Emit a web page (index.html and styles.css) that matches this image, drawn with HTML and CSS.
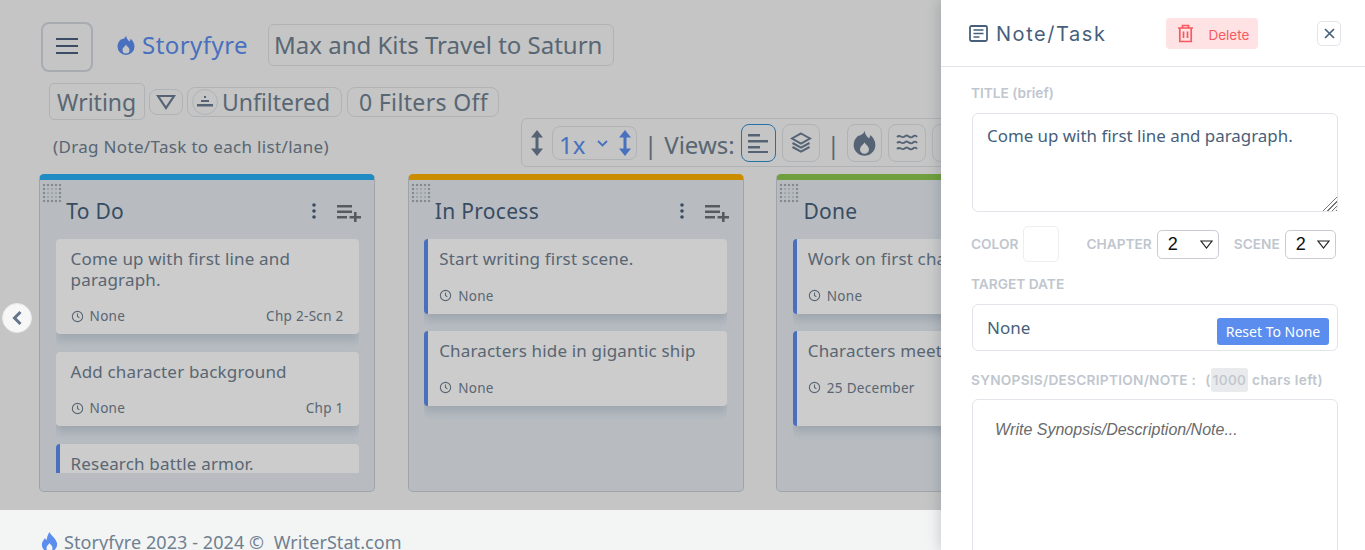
FILE: index.html
```html
<!DOCTYPE html>
<html lang="en">
<head>
  <meta charset="UTF-8" />
  <title>Storyfyre</title>
  <link rel="stylesheet" href="styles.css">
</head>
<body>
  <svg class="defs" width="0" height="0">
    <symbol id="flame" viewBox="3 1 18 20"><path d="M12 1.500c.6 3.400 2 4.600 3.600 6 .5-.8.8-1.700.9-2.700 2.500 1.900 4 4.700 4 7.700a8.500 8.500 0 0 1-17 0c0-3.100 1.500-5.300 3.300-7C9.800 5 11.700 3.700 12 1.500zM12 10.500c-.4 1.500-3.500 3-3.500 5.500a3.500 3.500 0 0 0 7 0c0-2.500-3.100-4-3.500-5.500z" fill-rule="evenodd"/></symbol>
    <symbol id="clock" viewBox="0 0 24 24"><circle cx="12" cy="12" r="9.500" fill="none" stroke="currentColor" stroke-width="2"/><path d="M12 6.500V12l3.500 2.500" fill="none" stroke="currentColor" stroke-width="2"/></symbol>
    <symbol id="kebab" viewBox="0 0 6 18"><circle cx="3" cy="3" r="1.800"/><circle cx="3" cy="9" r="1.800"/><circle cx="3" cy="15" r="1.800"/></symbol>
    <symbol id="addlist" viewBox="0 0 24 18"><path d="M0 1h15v2.400H0zM0 6.500h15v2.400H0zM0 12h10v2.400H0zM17 8h2.600v4H24v2.500h-4.400V18H17v-3.500h-4.500V12H17z"/></symbol>
    <symbol id="updown" viewBox="0 0 14 26"><path d="M7 0l6 7.500H8.500v11H13L7 26l-6-7.500h4.500v-11H1z"/></symbol>
  </svg>

  <main class="app">
    <header class="top-row">
      <button class="menu-btn" type="button">
        <svg width="22" height="16" viewBox="0 0 22 16"><path d="M0 1h22M0 8h22M0 15h22" stroke="#4a5f7e" stroke-width="2"/></svg>
      </button>
      <div class="brand">
        <svg class="brand-icon"><use href="#flame"/></svg>
        <span>Storyfyre</span>
      </div>
      <div class="project">Max and Kits Travel to Saturn</div>
    </header>

    <div class="second-row">
      <div class="second-left">
        <div class="filters">
          <div class="chip chip-writing">Writing</div>
          <div class="chip chip-tri">
            <svg width="20" height="16" viewBox="0 0 20 16"><path d="M2 2h16l-8 12z" fill="none" stroke="#6b7c93" stroke-width="2.200"/></svg>
          </div>
          <div class="chip chip-unfiltered">
            <span class="round-icon">
              <svg width="18" height="14" viewBox="0 0 18 14"><path d="M8 1h2v2H8zM5 5h8v2H5zM1 9h16v2.500H1z" fill="#6b7c93"/></svg>
            </span>
            Unfiltered
          </div>
          <div class="chip chip-off">0 Filters Off</div>
        </div>
        <p class="hint">(Drag Note/Task to each list/lane)</p>
      </div>

      <div class="toolbar">
        <svg class="ud"><use href="#updown"/></svg>
        <div class="zoom-sel">
          <span>1x</span>
          <svg class="chev" width="11" height="7" viewBox="0 0 11 7"><path d="M1 1l4.500 4.500L10 1" fill="none" stroke="#5b8def" stroke-width="1.800"/></svg>
          <svg class="ud ud-blue"><use href="#updown"/></svg>
        </div>
        <span class="sep">|</span>
        <span class="views">Views:</span>
        <div class="tool tool-active">
          <svg width="20" height="20" viewBox="0 0 20 20"><path d="M0 1h12v2.400H0zM0 7h20v2.400H0zM0 13h12v2.400H0zM0 18h20v2H0z" fill="#6b7c93"/></svg>
        </div>
        <div class="tool tool-wide">
          <svg width="22" height="22" viewBox="0 0 22 22"><path d="M11 1.500l9 5-9 5-9-5z M2.500 11l8.500 4.700 8.500-4.700 M2.500 15l8.500 4.700 8.500-4.700" fill="none" stroke="#6b7c93" stroke-width="2"/></svg>
        </div>
        <span class="sep sep-2">|</span>
        <div class="tool tool-flame-box">
          <svg class="tool-flame"><use href="#flame"/></svg>
        </div>
        <div class="tool tool-wide">
          <svg width="22" height="18" viewBox="0 0 22 18"><path d="M1 3c3-3 4 1 6.500 0S10 .5 12 2s3.500 2 5 .5 3-1 4 .5M1 9c3-3 4 1 6.500 0s2.500-2.500 4.500-1 3.500 2 5 .5 3-1 4 .5M1 15c3-3 4 1 6.500 0s2.500-2.500 4.500-1 3.500 2 5 .5 3-1 4 .5" fill="none" stroke="#6b7c93" stroke-width="1.800"/></svg>
        </div>
        <div class="tool tool-wide"></div>
      </div>
    </div>

    <section class="board">
      <div class="lane lane-blue">
        <span class="grip"></span>
        <div class="lane-head">
          <h2>To Do</h2>
          <svg class="kebab"><use href="#kebab"/></svg>
          <svg class="addlist"><use href="#addlist"/></svg>
        </div>
        <div class="cards">
          <article class="card card-tall">
            <p class="card-title">Come up with first line and paragraph.</p>
            <div class="card-meta">
              <svg class="clock"><use href="#clock"/></svg><span>None</span><span class="where">Chp 2-Scn 2</span>
            </div>
          </article>
          <article class="card">
            <p class="card-title">Add character background</p>
            <div class="card-meta">
              <svg class="clock"><use href="#clock"/></svg><span>None</span><span class="where">Chp 1</span>
            </div>
          </article>
          <article class="card card-bar">
            <p class="card-title">Research battle armor.</p>
          </article>
        </div>
      </div>

      <div class="lane lane-orange">
        <span class="grip"></span>
        <div class="lane-head">
          <h2>In Process</h2>
          <svg class="kebab"><use href="#kebab"/></svg>
          <svg class="addlist"><use href="#addlist"/></svg>
        </div>
        <div class="cards">
          <article class="card card-bar">
            <p class="card-title">Start writing first scene.</p>
            <div class="card-meta">
              <svg class="clock"><use href="#clock"/></svg><span>None</span>
            </div>
          </article>
          <article class="card card-bar">
            <p class="card-title">Characters hide in gigantic ship</p>
            <div class="card-meta">
              <svg class="clock"><use href="#clock"/></svg><span>None</span>
            </div>
          </article>
        </div>
      </div>

      <div class="lane lane-green">
        <span class="grip"></span>
        <div class="lane-head">
          <h2>Done</h2>
          <svg class="kebab"><use href="#kebab"/></svg>
          <svg class="addlist"><use href="#addlist"/></svg>
        </div>
        <div class="cards">
          <article class="card card-bar">
            <p class="card-title">Work on first chapter</p>
            <div class="card-meta">
              <svg class="clock"><use href="#clock"/></svg><span>None</span>
            </div>
          </article>
          <article class="card card-bar card-tall">
            <p class="card-title">Characters meet on the ship</p>
            <div class="card-meta">
              <svg class="clock"><use href="#clock"/></svg><span>25 December</span>
            </div>
          </article>
        </div>
      </div>
    </section>

    <div class="dim"></div>
    <button class="back-btn" type="button">
      <svg width="12" height="16" viewBox="0 0 12 16"><path d="M9.500 2L3.500 8l6 6" fill="none" stroke="#64748b" stroke-width="3"/></svg>
    </button>
  </main>

  <footer class="site-footer">
    <svg class="footer-flame" viewBox="0 0 16 20"><path d="M8 0c1 3 6 6 7.500 11 .8 4.500-3 9-7.500 9s-8.300-4-7.500-8.500C1 9 2.500 7.500 3.500 6c.3 1 .8 1.800 1.500 2.300C5.500 5 6.500 2 8 0zM8 11c-1 1.500-3 3-3 5a3 3 0 0 0 6 0c0-2-2-3.500-3-5z" fill="#5b8def" fill-rule="evenodd"/></svg>
    <span>Storyfyre 2023 - 2024 ©&nbsp; WriterStat.com</span>
  </footer>

  <aside class="panel">
    <div class="panel-head">
      <svg class="note-icon" width="19" height="17" viewBox="0 0 19 17"><rect x="1" y="1" width="17" height="15" rx="1.500" fill="none" stroke="#475f7b" stroke-width="1.800"/><path d="M4.500 5h10M4.500 8.500h10M4.500 12h6" stroke="#475f7b" stroke-width="1.600"/></svg>
      <h1>Note/Task</h1>
      <button class="delete-btn" type="button">
        <svg width="17" height="19" viewBox="0 0 17 19"><path d="M1 4h15M5.500 4V1.500h6V4M2.800 4v13.500h11.400V4M6.500 7.500v6.500M10.500 7.500v6.500" fill="none" stroke="#f8595f" stroke-width="1.700"/></svg>
        <span>Delete</span>
      </button>
      <button class="close-btn" type="button">
        <svg width="11" height="11" viewBox="0 0 11 11"><path d="M1 1l9 9M10 1l-9 9" stroke="#475f7b" stroke-width="1.700"/></svg>
      </button>
    </div>
    <form class="panel-body">
      <label class="field-label label-title">TITLE (brief)</label>
      <textarea class="title-input">Come up with first line and paragraph.</textarea>

      <div class="meta-row">
        <label class="field-label">COLOR</label>
        <span class="swatch"></span>
        <label class="field-label label-chapter">CHAPTER</label>
        <div class="sel sel-chapter"><span>2</span><svg width="13" height="9" viewBox="0 0 13 9"><path d="M1 1h11L6.500 8z" fill="none" stroke="#222" stroke-width="1.200"/></svg></div>
        <label class="field-label label-scene">SCENE</label>
        <div class="sel sel-scene"><span>2</span><svg width="13" height="9" viewBox="0 0 13 9"><path d="M1 1h11L6.500 8z" fill="none" stroke="#222" stroke-width="1.200"/></svg></div>
      </div>

      <label class="field-label label-date">TARGET DATE</label>
      <div class="date-box">
        <span>None</span>
        <button class="reset-btn" type="button">Reset To None</button>
      </div>

      <div class="syn-label">
        <span class="field-label syn-name">SYNOPSIS/DESCRIPTION/NOTE :</span>
        <span class="field-label syn-count">(<b>1000</b> chars left)</span>
      </div>
      <textarea class="syn-input" placeholder="Write Synopsis/Description/Note..."></textarea>
    </form>
  </aside>
</body>
</html>
```

FILE: styles.css
```css
:root {
  --slate: #708090;
  --navy: #475f7b;
  --blue: #5b8def;
  --line: #e2e4ea;
  --label: #c0c6ce;
}

* {
  box-sizing: border-box;
  margin: 0;
  padding: 0;
}

html, body {
  height: 100%;
  overflow: hidden;
}

body {
  font-family: "Noto Sans", sans-serif;
  background: #f3f5f5;
  color: var(--slate);
}

.defs {
  position: absolute;
}

.app {
  position: relative;
  height: 510px;
  padding: 22px 0 0 39px;
  overflow: hidden;
  background: #f5f7f6;
}

.dim {
  position: absolute;
  inset: 0;
  background: rgba(0, 0, 0, 0.2);
}

/* top row */
.top-row {
  display: flex;
  align-items: center;
  height: 50px;
}

.menu-btn {
  width: 52px;
  height: 50px;
  margin-left: 2px;
  border: 2px solid #d3d8de;
  border-radius: 8px;
  background: #f5f7f6;
}

.brand {
  display: flex;
  align-items: center;
  gap: 7px;
  margin: -5px 0 0 24px;
  color: var(--blue);
  font-size: 24px;
  letter-spacing: 0.45px;
}

.brand-icon {
  width: 18px;
  height: 20px;
  fill: var(--blue);
}

.project {
  width: 346px;
  height: 42px;
  margin: -4px 0 0 20px;
  padding-left: 5px;
  line-height: 40px;
  border: 1px solid #dde0e4;
  border-radius: 6px;
  font-size: 24px;
  white-space: nowrap;
}

/* filter row + toolbar */
.second-row {
  display: flex;
  height: 84px;
  margin-top: 11px;
  white-space: nowrap;
}

.second-left {
  width: 482px;
  padding-left: 10px;
}

.filters {
  display: flex;
  align-items: center;
  gap: 4px;
  height: 37px;
}

.chip {
  display: flex;
  align-items: center;
  flex: none;
  height: 30px;
  border: 1px solid #dde0e4;
  border-radius: 8px;
  font-size: 23px;
}

.chip-writing {
  width: 96px;
  height: 37px;
  padding-left: 7px;
  border-radius: 5px;
}

.chip-tri {
  justify-content: center;
  width: 34px;
  height: 26px;
}

.chip-unfiltered {
  gap: 4px;
  width: 155px;
  padding-left: 4px;
}

.chip-off {
  width: 152px;
  margin-left: 1px;
  padding-left: 11px;
  letter-spacing: 0.35px;
}

.round-icon {
  display: flex;
  align-items: center;
  justify-content: center;
  width: 26px;
  height: 26px;
  border: 1px solid #dde0e4;
  border-radius: 50%;
}

.hint {
  margin: 15px 0 0 4px;
  font-size: 17px;
  letter-spacing: 0.33px;
}

.toolbar {
  display: flex;
  align-items: center;
  flex: none;
  width: 460px;
  height: 49px;
  margin-top: 35px;
  padding-left: 8px;
  border: 1px solid #dde0e4;
  border-radius: 6px;
}

.ud {
  width: 14px;
  height: 26px;
  flex: none;
  fill: #6b7c93;
}

.ud-blue {
  fill: var(--blue);
}

.zoom-sel {
  display: flex;
  align-items: center;
  width: 85px;
  height: 34px;
  margin-left: 8px;
  padding-left: 6px;
  border: 1px solid #dde0e4;
  border-radius: 8px;
  color: var(--blue);
  font-size: 24px;
}

.zoom-sel span {
  margin-top: 3px;
}

.chev {
  margin: 2px 10px 0 12px;
}

.sep {
  margin: 4px 0 0 7px;
  font-size: 24px;
}

.views {
  margin: 4px 0 0 7px;
  font-size: 24px;
}

.tool {
  display: flex;
  align-items: center;
  justify-content: center;
  flex: none;
  width: 35px;
  height: 38px;
  margin-left: 6px;
  border: 1px solid #dde0e4;
  border-radius: 8px;
}

.tool-active {
  border-color: #2f8fd0;
}

.tool-wide {
  width: 38px;
}

.tool-flame-box {
  margin-left: 7px;
}

.tool-flame {
  width: 23px;
  height: 26px;
  fill: #6b7c93;
}

/* board */
.board {
  display: flex;
  gap: 32.6px;
  margin-top: 7px;
}

.lane {
  position: relative;
  flex: none;
  width: 336px;
  height: 318px;
  padding: 0 15.4px 0 15.6px;
  border: 1px solid #c8cdd3;
  border-top: 6px solid;
  border-radius: 5px;
  background: #e6ecf2;
}

.lane-blue { border-top-color: #27b0f5; }
.lane-orange { border-top-color: #ffaf00; }
.lane-green { border-top-color: #8bc74f; }

.grip {
  position: absolute;
  top: 3px;
  left: 2px;
  width: 20px;
  height: 20px;
  background: radial-gradient(circle, #a8adb4 1.400px, transparent 1.600px) 0 0 / 4px 4px;
}

.grip::after {
  content: "";
  position: absolute;
  inset: 4px;
  background: rgba(230, 236, 242, 0.55);
}

.lane-head {
  display: flex;
  align-items: center;
  height: 59px;
  padding: 3px 0 0 10.6px;
}

.lane-head h2 {
  flex: 1;
  color: var(--navy);
  font-size: 21px;
  font-weight: 400;
  letter-spacing: 0.3px;
}

.kebab {
  width: 6px;
  height: 18px;
  fill: var(--navy);
}

.addlist {
  width: 24px;
  height: 18px;
  margin: 3px -2px 0 20px;
  fill: #6d7278;
}

.cards {
  display: flex;
  flex-direction: column;
  gap: 17.6px;
  height: 234px;
  overflow: hidden;
}

.card {
  flex: none;
  padding: 10px 15px 0;
  height: 74.6px;
  border-radius: 4px;
  background: #fff;
  box-shadow: 0 6px 10px rgba(71, 95, 123, 0.2);
}

.card-bar {
  padding-left: 11px;
  border-left: 4px solid var(--blue);
}

.card-tall {
  height: 95px;
}

.card-title {
  font-size: 17px;
  line-height: 20.5px;
  letter-spacing: 0.17px;
}

.card-meta {
  display: flex;
  align-items: center;
  margin-top: 17px;
  font-size: 13.5px;
  letter-spacing: 0.3px;
}

.clock {
  width: 13px;
  height: 13px;
  margin-right: 6px;
}

.where {
  margin-left: auto;
}

.back-btn {
  position: absolute;
  top: 303px;
  left: 2px;
  display: flex;
  align-items: center;
  justify-content: center;
  width: 30px;
  height: 30px;
  border: 1px solid #e6e8ea;
  border-radius: 50%;
  background: #f7f7f7;
}

/* footer */
.site-footer {
  display: flex;
  gap: 6px;
  height: 40px;
  padding: 22px 0 0 41px;
  font-size: 18px;
  line-height: 20px;
  letter-spacing: 0.08px;
}

.footer-flame {
  width: 17px;
  height: 20px;
  flex: none;
}

/* side panel */
.panel {
  position: absolute;
  top: 0;
  right: 0;
  width: 424px;
  height: 100%;
  overflow: hidden;
  background: #fff;
  box-shadow: -2px 0 12px rgba(40, 50, 70, 0.2);
  font-family: Inter, sans-serif;
}

.panel-head {
  display: flex;
  align-items: center;
  height: 67px;
  padding: 0 24px 0 28px;
  border-bottom: 1px solid var(--line);
}

.panel-head h1 {
  margin: 1px 0 0 8px;
  color: var(--navy);
  font-size: 20px;
  font-weight: 400;
  letter-spacing: 1.55px;
}

.delete-btn {
  display: flex;
  align-items: center;
  gap: 14px;
  width: 92px;
  height: 31px;
  margin-left: 60px;
  padding-left: 11px;
  border: none;
  border-radius: 4px;
  background: #ffe2e3;
  color: #f8595f;
  font: 13.5px Inter, sans-serif;
}

.delete-btn span {
  margin-top: 3px;
}

.close-btn {
  display: flex;
  align-items: center;
  justify-content: center;
  width: 24px;
  height: 25px;
  margin-left: auto;
  border: 1px solid var(--line);
  border-radius: 5px;
  background: #fff;
}

.panel-body {
  display: flex;
  flex-direction: column;
  padding: 18px 27px 0 31px;
}

.field-label {
  color: var(--label);
  font-size: 13.7px;
  font-weight: 600;
  white-space: nowrap;
}

.label-title {
  margin-left: -1px;
}

.title-input {
  width: 366px;
  height: 99px;
  margin-top: 12px;
  padding: 10px 14px;
  border: 1.5px solid var(--line);
  border-radius: 6px;
  color: var(--navy);
  font: 16.9px "Noto Sans", sans-serif;
  outline: none;
}

.title-input::-webkit-resizer {
  background:
    linear-gradient(135deg, #fff 50%, transparent 50%),
    repeating-linear-gradient(135deg, transparent 0 2px, #777 2px 3px);
}

.meta-row {
  display: flex;
  align-items: center;
  height: 36px;
  margin: 14px 0 0 -1px;
}

.swatch {
  width: 36px;
  height: 36px;
  margin-left: 5px;
  border: 1px solid #eceef1;
  border-radius: 5px;
}

.label-chapter {
  margin-left: 27px;
}

.label-scene {
  margin-left: 15px;
}

.sel {
  display: flex;
  align-items: center;
  justify-content: space-between;
  height: 29px;
  margin-left: 5px;
  padding: 0 5px 0 10px;
  border: 1px solid #c9ccd2;
  border-radius: 5px;
  color: #111;
  font: 18px "Liberation Sans", sans-serif;
}

.sel-chapter {
  width: 62px;
}

.sel-scene {
  width: 51px;
}

.label-date {
  margin: 14px 0 0 -1px;
}

.date-box {
  position: relative;
  width: 366px;
  height: 47px;
  margin-top: 12px;
  padding: 11px 14px;
  border: 1.5px solid var(--line);
  border-radius: 6px;
  color: var(--navy);
  font-family: "Noto Sans", sans-serif;
  font-size: 17px;
}

.reset-btn {
  position: absolute;
  top: 13px;
  right: 8px;
  width: 112px;
  height: 27px;
  border: none;
  border-radius: 3px;
  background: var(--blue);
  color: #fff;
  font: 14px "Noto Sans", sans-serif;
}

.syn-label {
  display: flex;
  gap: 9px;
  margin: 17px 0 0 -1px;
  height: 24px;
  align-items: center;
}

.syn-name {
  letter-spacing: 0.25px;
}

.syn-count {
  letter-spacing: 0.35px;
}

.syn-count b {
  display: inline-block;
  padding: 4px 2px;
  border-radius: 3px;
  background: #e8eaec;
  font-weight: 500;
}

.syn-input {
  width: 366px;
  height: 220px;
  margin-top: 7px;
  padding: 21px 22px;
  border: 1.5px solid var(--line);
  border-radius: 6px;
  font: italic 16px "Liberation Sans", sans-serif;
  outline: none;
  resize: none;
}

.syn-input::placeholder {
  color: #6a6a6a;
}
```
